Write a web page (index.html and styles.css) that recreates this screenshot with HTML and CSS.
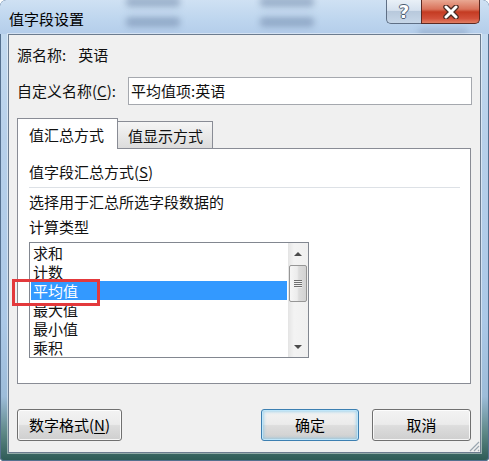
FILE: index.html
```html
<!DOCTYPE html>
<html lang="zh-CN">
<head>
<meta charset="utf-8">
<title>值字段设置</title>
<link rel="stylesheet" href="styles.css">
</head>
<body>
<div class="window">
  <div class="titlebar">
    <div class="glass" aria-hidden="true">
      <div class="blob b1"></div>
      <div class="blob b2"></div>
      <div class="blob b3"></div>
      <div class="blob b4"></div>
      <div class="blob b5"></div>
    </div>
    <div class="title">值字段设置</div>
    <div class="caption">
      <div class="cap help">?</div>
      <div class="cap close">
        <svg width="20" height="14" viewBox="0 0 20 14">
          <path d="M5 2 L15 12 M15 2 L5 12" stroke="#4a2b24" stroke-width="5.5" stroke-linecap="round" fill="none"/>
          <path d="M5 2 L15 12 M15 2 L5 12" stroke="#ffffff" stroke-width="3" stroke-linecap="round" fill="none"/>
        </svg>
      </div>
    </div>
  </div>
  <div class="client">
    <div class="source">源名称:<span class="source-val">英语</span></div>
    <div class="name-row">
      <span class="label">自定义名称(<u>C</u>):</span>
      <div class="input">平均值项:英语</div>
    </div>
    <div class="tabs">
      <div class="tab active">值汇总方式</div>
      <div class="tab">值显示方式</div>
    </div>
    <div class="panel">
      <div class="group-title">值字段汇总方式(<u>S</u>)</div>
      <div class="sep"></div>
      <div class="desc">选择用于汇总所选字段数据的</div>
      <div class="desc desc2">计算类型</div>
      <div class="listbox">
        <ul class="items">
          <li>求和</li>
          <li>计数</li>
          <li class="selected">平均值</li>
          <li>最大值</li>
          <li>最小值</li>
          <li>乘积</li>
        </ul>
        <div class="scrollbar">
          <div class="arrow-area"><span class="tri up"></span></div>
          <div class="thumb"><span class="grip-lines"></span></div>
          <div class="track-rest"></div>
          <div class="arrow-area"><span class="tri down"></span></div>
        </div>
      </div>
    </div>
    <div class="buttons">
      <div class="btn num">数字格式(<u>N</u>)</div>
      <div class="btn ok">确定</div>
      <div class="btn cancel">取消</div>
    </div>
    <div class="highlight"></div>
    <svg class="grip" width="12" height="12" viewBox="0 0 12 12">
      <path d="M11 2 L2 11 M11 6 L6 11 M11 10 L10 11" stroke="#9aa6b0" stroke-width="1.2" fill="none"/>
    </svg>
  </div>
</div>
</body>
</html>
```
FILE: styles.css
```css
html, body {
  margin: 0;
  padding: 0;
  background: #ffffff;
}

body {
  font-family: "Noto Sans CJK SC", "Noto Sans", sans-serif;
  font-size: 15px;
  color: #111111;
}

u {
  text-decoration: underline;
  text-underline-offset: 2px;
  text-decoration-thickness: 1px;
}

.window {
  width: 489px;
  height: 461px;
  box-sizing: border-box;
  border-radius: 6px 6px 4px 4px;
  overflow: hidden;
  display: flex;
  flex-direction: column;
  background: linear-gradient(180deg, #c6dcf1 0%, #b7d0ea 30%, #abc8e7 70%, #9dbcd9 86%, #5d8785 94%, #2d5a55 100%);
  box-shadow: inset 0 0 0 1px #55708f;
}

.titlebar {
  position: relative;
  height: 34px;
  flex: none;
  display: flex;
  justify-content: space-between;
  align-items: flex-start;
  padding: 0 9px;
  background: linear-gradient(180deg, #cfe1f3 0%, #bdd5ee 60%, #b4cdea 100%);
  border-radius: 6px 6px 0 0;
}

.glass {
  position: absolute;
  left: 0;
  top: 0;
  right: 0;
  bottom: 0;
  overflow: hidden;
}

.blob {
  position: absolute;
  height: 10px;
  border-radius: 4px;
  background: rgba(95, 120, 155, 0.45);
  filter: blur(3px);
}
.b1 { left: 126px; top: -3px; width: 54px; }
.b2 { left: 260px; top: -3px; width: 54px; }
.b3 { left: 126px; top: 17px; width: 54px; }
.b4 { left: 260px; top: 17px; width: 54px; }
.b5 { left: 418px; top: 28px; width: 50px; background: rgba(95, 120, 155, 0.25); }

.title {
  position: relative;
  margin-top: 9px;
  line-height: 20px;
  color: #000000;
}

.caption {
  position: relative;
  display: flex;
}

.cap {
  box-sizing: border-box;
  height: 24px;
  display: flex;
  align-items: center;
  justify-content: center;
}

.help {
  width: 35px;
  border: 1px solid #5f6f85;
  border-top: none;
  border-right: none;
  border-radius: 0 0 0 5px;
  background: linear-gradient(180deg, #e9f0f7 0%, #d5e1ee 45%, #b8c9dc 50%, #c7d7e8 100%);
  color: #ffffff;
  font-family: "DejaVu Sans", sans-serif;
  font-weight: bold;
  font-size: 18px;
  line-height: 22px;
  text-shadow: 1px 0 0 #4d5d70, -1px 0 0 #4d5d70, 0 1px 0 #4d5d70, 0 -1px 0 #4d5d70;
}

.close {
  width: 59px;
  border: 1px solid #5c2a22;
  border-top: none;
  border-radius: 0 0 5px 0;
  background: linear-gradient(180deg, #e9a893 0%, #d9725a 40%, #c43b22 52%, #d2503a 80%, #e17f63 100%);
}

.client {
  position: relative;
  box-sizing: border-box;
  margin: 0 8px;
  height: 419px;
  flex: none;
  border: 1px solid #6c7c8f;
  background: #f0f0f0;
  padding: 0 8px;
  display: flex;
  flex-direction: column;
  box-shadow: 0 0 0 1px rgba(255, 255, 255, 0.45);
}

.source {
  margin-top: 10px;
  line-height: 20px;
}

.source-val {
  margin-left: 12px;
}

.name-row {
  margin-top: 12px;
  display: flex;
  align-items: center;
  justify-content: space-between;
  height: 28px;
}

.label {
  line-height: 20px;
}

.input {
  box-sizing: border-box;
  width: 344px;
  height: 28px;
  border: 1px solid #a5a8ae;
  background: #ffffff;
  padding-left: 2px;
  line-height: 26px;
}

.tabs {
  position: relative;
  z-index: 1;
  margin-top: 13px;
  height: 30px;
  display: flex;
  align-items: flex-end;
}

.tab {
  box-sizing: border-box;
  border: 1px solid #898c95;
  border-bottom: none;
  line-height: 20px;
}

.tab.active {
  position: relative;
  z-index: 2;
  width: 101px;
  height: 31px;
  margin-bottom: -1px;
  padding: 6px 0 0 11px;
  background: #ffffff;
}

.tab:not(.active) {
  width: 96px;
  height: 27px;
  margin-left: -1px;
  padding: 4px 0 0 10px;
  background: linear-gradient(180deg, #f5f5f5 0%, #e9e9e9 50%, #dcdcdc 100%);
}

.panel {
  box-sizing: border-box;
  width: 454px;
  height: 236px;
  border: 1px solid #898c95;
  background: #ffffff;
  padding: 0 10px 0 11px;
}

.group-title {
  margin-top: 13px;
  line-height: 20px;
}

.sep {
  margin-top: 5px;
  height: 1px;
  background: #dde1e6;
}

.desc {
  margin-top: 4px;
  line-height: 20px;
}

.desc2 {
  margin-top: 5px;
}

.listbox {
  margin-top: 5px;
  box-sizing: border-box;
  width: 280px;
  height: 116px;
  border: 1px solid #828790;
  display: flex;
  background: #ffffff;
}

.items {
  list-style: none;
  margin: 0;
  padding: 0 1px;
  flex: 1;
}

.items li {
  height: 19px;
  line-height: 19px;
  padding-left: 2px;
  white-space: nowrap;
}

.items li.selected {
  background: #3399ff;
  color: #ffffff;
}

.scrollbar {
  width: 20px;
  display: flex;
  flex-direction: column;
  background: linear-gradient(90deg, #e4e4e4 0%, #f3f3f3 30%, #f0f0f0 100%);
}

.arrow-area {
  height: 20px;
  display: flex;
  align-items: center;
  justify-content: center;
}

.tri {
  width: 0;
  height: 0;
  border-left: 4px solid transparent;
  border-right: 4px solid transparent;
}

.tri.up {
  border-bottom: 4px solid #4b4b4b;
  margin-top: 2px;
}

.tri.down {
  border-top: 4px solid #4b4b4b;
}

.thumb {
  box-sizing: border-box;
  margin: 2px 1px 0 1px;
  height: 37px;
  border: 1px solid #969696;
  border-radius: 2px;
  background: linear-gradient(90deg, #f6f6f6 0%, #ececec 45%, #dcdcdc 55%, #d2d2d2 100%);
  display: flex;
  align-items: center;
  justify-content: center;
}

.grip-lines {
  width: 8px;
  height: 8px;
  background: repeating-linear-gradient(180deg, #6e6e6e 0, #6e6e6e 1px, #f0f0f0 1px, #f0f0f0 2px);
}

.track-rest {
  flex: 1;
}

.buttons {
  margin-top: 25px;
  margin-right: 1px;
  display: flex;
  height: 32px;
}

.btn {
  box-sizing: border-box;
  height: 32px;
  border: 1px solid #707070;
  border-radius: 3px;
  background: linear-gradient(180deg, #f3f3f3 0%, #ebebeb 48%, #dddddd 52%, #cfcfcf 100%);
  box-shadow: inset 0 0 0 1px rgba(255, 255, 255, 0.8);
  text-align: center;
  line-height: 30px;
  color: #000000;
}

.num {
  width: 105px;
}

.ok {
  width: 98px;
  margin-left: auto;
  border-color: #3c7fb1;
  box-shadow: inset 0 0 0 1px #bfe6fa, inset 0 0 3px 2px rgba(112, 192, 231, 0.55);
}

.cancel {
  width: 99px;
  margin-left: 13px;
}

.highlight {
  position: absolute;
  left: 3px;
  top: 244px;
  width: 88px;
  height: 27px;
  box-sizing: border-box;
  border: 3px solid #e3393c;
  z-index: 3;
}

.grip {
  position: absolute;
  right: 0;
  bottom: 0;
}
```
